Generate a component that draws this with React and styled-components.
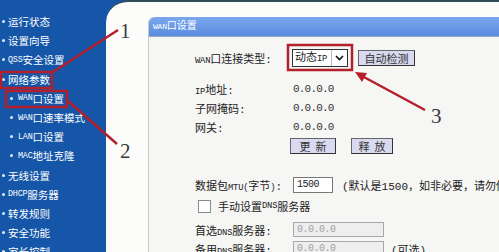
import React from 'react'
import styled, { createGlobalStyle } from 'styled-components'

const GlobalStyle = createGlobalStyle`
  html, body {
    margin: 0;
    padding: 0;
    background: #fff;
    overflow: hidden;
  }
  body {
    font-family: "Liberation Mono", "Noto Sans CJK SC", monospace;
  }
`

const Page = styled.div`
  position: relative;
  display: flex;
  width: 499px;
  height: 252px;
  overflow: hidden;
  background: #1656a8;
`

const Sidebar = styled.ul`
  flex: none;
  width: 106px;
  margin: 0;
  padding: 12px 0 0;
  list-style: none;
`

const NavItem = styled.li`
  display: flex;
  align-items: center;
  height: 19.2px;
  padding-left: ${props => (props.$sub ? 10 : 2)}px;
  color: #fff;
  font-size: 10.5px;
  white-space: nowrap;

  &::before {
    content: '';
    width: 3px;
    height: 3px;
    margin-right: ${props => (props.$sub ? 5 : 3)}px;
    border-radius: 50%;
    background: #e4ecf7;
  }
`

// latin runs in the original render narrower than the CJK glyphs
const Latin = styled.span`
  font-size: 0.8em;
  letter-spacing: -0.2px;
`

const Main = styled.div`
  flex: 1;
  display: flex;
  padding-left: 42px;
  background: #fcfcfb;
  border-top: 2px solid #2f4d5c;
  border-top-left-radius: 22px;
`

const Panel = styled.section`
  flex: 1;
  display: flex;
  flex-direction: column;
  margin-top: 15px;
  background: #f6f6f4;
  border-left: 1px solid #c8c8be;
  border-top-left-radius: 6px;
`

const PanelTitle = styled.div`
  height: 19px;
  line-height: 19px;
  padding-left: 4px;
  color: #fff;
  font-size: 10px;
  background: linear-gradient(#7ba7ee, #5a8cdf);
  border-top-left-radius: 6px;
  border-bottom: 1px solid #9aa8bb;
`

const Form = styled.div`
  display: flex;
  flex-direction: column;
  padding: 10px 0 0 46px;
`

const Row = styled.div`
  display: flex;
  align-items: center;
  height: ${props => props.$h || 19}px;
  margin-top: ${props => props.$mt || 0}px;
  color: #222;
  font-size: 11px;
  white-space: nowrap;
`

const Label = styled.span`
  flex: none;
  width: 95px;
`

const Value = styled.span`
  margin-left: ${props => props.$ml || 3}px;
  color: #333;
  letter-spacing: -0.8px;
`

const Select = styled.div`
  display: flex;
  align-items: stretch;
  width: 56px;
  height: 18px;
  margin-left: 2px;
  box-sizing: border-box;
  border: 1px solid #333;
  background: #fff;
`

const SelectText = styled.span`
  flex: 1;
  padding-left: 2px;
  line-height: 16px;
  font-size: 11px;
`

const SelectArrow = styled.span`
  display: flex;
  align-items: center;
  justify-content: center;
  width: 15px;
  border-left: 1px solid #bbb;
`

const Button = styled.button`
  width: ${props => props.$w}px;
  height: 16px;
  margin-left: ${props => props.$ml || 0}px;
  padding: 0;
  box-sizing: border-box;
  border: 1px solid #666;
  border-right-color: #333;
  border-bottom-color: #333;
  background: #d9d9ef;
  color: #333;
  font-family: "Noto Sans CJK SC", sans-serif;
  font-size: 11px;
  line-height: 14px;
  letter-spacing: ${props => (props.$spaced ? 5 : 0)}px;
  text-indent: ${props => (props.$spaced ? 5 : 0)}px;
`

const Input = styled.div`
  width: ${props => props.$w}px;
  height: ${props => props.$h || 16}px;
  margin-left: 3px;
  padding-left: 3px;
  box-sizing: border-box;
  border: 1px solid ${props => (props.$disabled ? '#a8a8a8' : '#777')};
  background: ${props => (props.$disabled ? '#eeeeee' : '#fff')};
  color: ${props => (props.$disabled ? '#a0a0a0' : '#222')};
  font-size: 10px;
  line-height: ${props => (props.$h || 16) - 2}px;
  letter-spacing: -0.5px;
`

const Hint = styled.span`
  margin-left: ${props => props.$ml || 9}px;
  color: #222;
  font-size: 11px;
`

const Checkbox = styled.span`
  flex: none;
  width: 11px;
  height: 11px;
  margin: 0 7px 0 3px;
  border: 1px solid #8a8a8a;
  background: #fff;
`

const Annotations = styled.svg`
  position: absolute;
  left: 0;
  top: 0;
  pointer-events: none;
`

const Num = styled.text`
  font-family: "Liberation Serif", serif;
  font-size: 21px;
  fill: #3a3a3a;
`

const mixed = text =>
  text
    .split(/([A-Za-z()]+)/)
    .map((part, i) => (i % 2 ? <Latin key={i}>{part}</Latin> : part))

const nav = [
  ['运行状态'],
  ['设置向导'],
  ['QSS安全设置'],
  ['网络参数'],
  ['WAN口设置', true],
  ['WAN口速率模式', true],
  ['LAN口设置', true],
  ['MAC地址克隆', true],
  ['无线设置'],
  ['DHCP服务器'],
  ['转发规则'],
  ['安全功能'],
  ['家长控制'],
]

const RED = '#b3202c'

export default function App() {
  return (
    <>
      <GlobalStyle />
      <Page>
        <Sidebar>
          {nav.map(([text, sub]) => (
            <NavItem key={text} $sub={sub}>{mixed(text)}</NavItem>
          ))}
        </Sidebar>
        <Main>
          <Panel>
            <PanelTitle>{mixed('WAN口设置')}</PanelTitle>
            <Form>
              <Row $h={22}>
                <Label>{mixed('WAN口连接类型:')}</Label>
                <Select>
                  <SelectText>{mixed('动态IP')}</SelectText>
                  <SelectArrow>
                    <svg width="9" height="6" viewBox="0 0 9 6">
                      <path d="M1 1l3.5 3.5L8 1" fill="none" stroke="#111" strokeWidth="1.6" />
                    </svg>
                  </SelectArrow>
                </Select>
                <Button $w={57} $ml={10}>自动检测</Button>
              </Row>
              <Row $mt={10}>
                <Label>{mixed('IP地址:')}</Label>
                <Value>0.0.0.0</Value>
              </Row>
              <Row>
                <Label>子网掩码:</Label>
                <Value>0.0.0.0</Value>
              </Row>
              <Row>
                <Label>网关:</Label>
                <Value>0.0.0.0</Value>
              </Row>
              <Row $h={18} $mt={1}>
                <Label />
                <Button $w={46} $spaced>更新</Button>
                <Button $w={42} $ml={15} $spaced>释放</Button>
              </Row>
              <Row $h={18} $mt={21}>
                <Label>{mixed('数据包MTU(字节):')}</Label>
                <Input $w={40}>1500</Input>
                <Hint>(默认是1500，如非必要，请勿修改)</Hint>
              </Row>
              <Row $h={18} $mt={3}>
                <Checkbox />
                {mixed('手动设置DNS服务器')}
              </Row>
              <Row $h={17} $mt={6}>
                <Label>{mixed('首选DNS服务器:')}</Label>
                <Input $w={91} $h={15} $disabled>0.0.0.0</Input>
              </Row>
              <Row $h={17} $mt={2}>
                <Label>{mixed('备用DNS服务器:')}</Label>
                <Input $w={91} $h={15} $disabled>0.0.0.0</Input>
                <Hint $ml={7}>(可选)</Hint>
              </Row>
            </Form>
          </Panel>
        </Main>
        <Annotations width="499" height="252" viewBox="0 0 499 252">
          <g fill="none" stroke={RED} strokeWidth="2.5">
            <rect x="1" y="72" width="51" height="16" />
            <rect x="6" y="91" width="61" height="16" />
            <rect x="288" y="45" width="64" height="25" />
            <path d="M53 72L118 30" />
            <path d="M68 101L117 144" />
            <path d="M425 110L362 76" />
          </g>
          <path d="M355 72l12 1-5 9z" fill={RED} />
          <Num x="120" y="38">1</Num>
          <Num x="120" y="158">2</Num>
          <Num x="431" y="123">3</Num>
        </Annotations>
      </Page>
    </>
  )
}
